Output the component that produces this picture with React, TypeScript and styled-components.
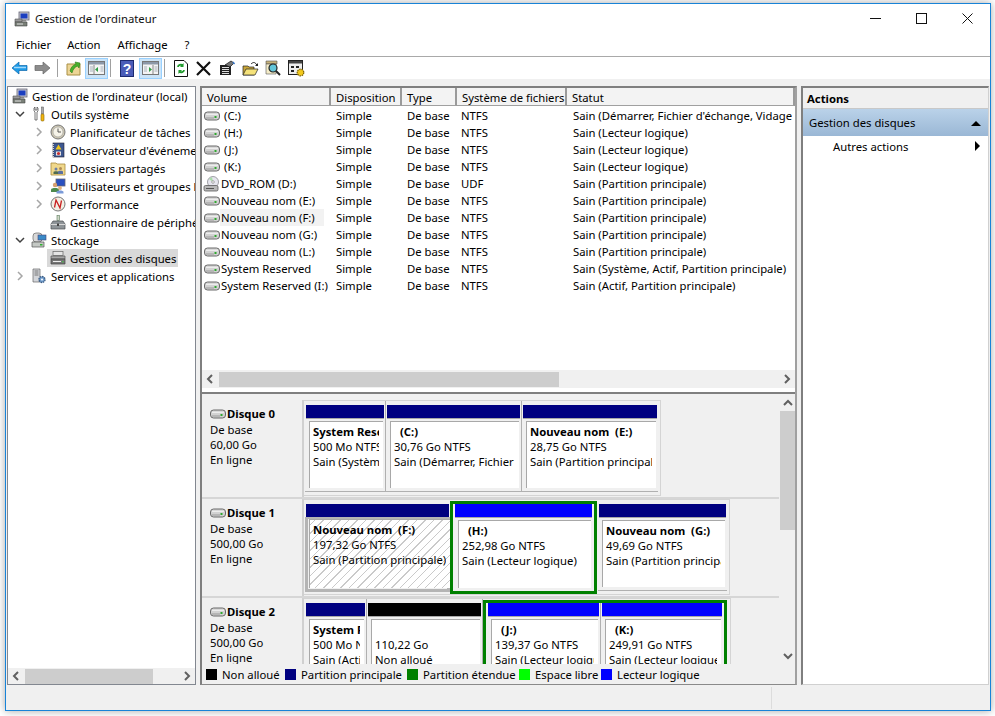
import React from "react";
import styled, { createGlobalStyle } from "styled-components";

const Global = createGlobalStyle`
  html, body { margin: 0; padding: 0; background: #fff; }
  body { font-family: "Noto Sans", "Liberation Sans", sans-serif; font-size: 11.3px; color: #000; overflow: hidden; }
  * { box-sizing: border-box; }
`;

const Page = styled.div`
  width: 995px; height: 716px; padding: 3px 4px 5px 5px; overflow: hidden;
`;
const Win = styled.div`
  width: 986px; height: 708px; background: #fff; border: 1px solid #1883d7;
  box-shadow: 0 0 8px rgba(0,0,0,.35); display: flex; flex-direction: column;
`;
const TitleBar = styled.div`
  height: 29px; display: flex; align-items: center; padding-left: 8px; gap: 5px; flex: none;
`;
const TitleText = styled.div` flex: 1; color: #111; `;
const WinButtons = styled.div` display: flex; `;
const WinButton = styled.div`
  width: 46px; height: 29px; display: flex; align-items: center; justify-content: center;
`;
const MenuBar = styled.div`
  height: 24px; display: flex; align-items: center; padding-left: 10px; gap: 15px; flex: none;
  border-bottom: 1px solid #a9a9a9; padding-bottom: 1px;
`;
const MenuItem = styled.div<{ $ml?: number }>` margin-left: ${p => p.$ml ?? 0}px; `;
const Toolbar = styled.div`
  height: 22px; flex: none; display: flex; align-items: center; padding-left: 5px; background: #fff;
`;
const ToolBtn = styled.div<{ $w?: number; $on?: boolean; $ml?: number }>`
  width: ${p => p.$w ?? 16}px; height: 21px; margin-left: ${p => p.$ml ?? 0}px; flex: none;
  display: flex; align-items: center; justify-content: center;
  background: ${p => (p.$on ? "#cce4f7" : "transparent")};
  border: ${p => (p.$on ? "1px solid #99d1ff" : "none")};
`;
const ToolSep = styled.div<{ $ml: number }>`
  width: 1px; height: 18px; background: #a0a0a0; margin-left: ${p => p.$ml}px; flex: none;
`;
const Workspace = styled.div`
  flex: 1; min-height: 0; background: #f0f0f0; display: flex; padding: 7px 2px 1px 1px; gap: 4px;
`;
const Panel = styled.div<{ $w: number }>`
  width: ${p => p.$w}px; flex: none; background: #fff; display: flex; flex-direction: column;
  border: 1px solid #828790; overflow: hidden;
`;
const StatusBar = styled.div`
  height: 24px; flex: none; background: #f0f0f0; display: flex; justify-content: flex-end;
`;
const StatusCell = styled.div`
  width: 219px; border-left: 1px solid #dcdcdc; margin: 1px 0 1px;
`;

/* tree */
const Tree = styled.div` flex: 1; min-height: 0; overflow: hidden; `;
const TreeRow = styled.div<{ $indent: number }>`
  height: 18px; display: flex; align-items: center; padding-left: ${p => p.$indent}px; white-space: nowrap;
`;
const Chevron = styled.div` width: 18px; flex: none; display: flex; align-items: center; justify-content: center; `;
const TreeIcon = styled.div` width: 19px; height: 18px; flex: none; display: flex; align-items: center; justify-content: center; margin-right: 3px; `;
const TreeLabel = styled.span``;
const Selected = styled.div`
  display: flex; align-items: center; height: 18px; background: #d9d9d9; width: 131px; margin-left: -1px; padding-left: 1px;
`;

/* scroll */
const HScroll = styled.div`
  height: 16px; flex: none; background: #f0f0f0; display: flex; align-items: center;
`;
const ScrollArrow = styled.div<{ $w?: number }>`
  width: ${p => p.$w ?? 17}px; height: 16px; flex: none; display: flex; align-items: center; justify-content: center;
`;
const HThumb = styled.div<{ $w: number }>` width: ${p => p.$w}px; height: 15px; background: #cdcdcd; flex: none; `;
const Spacer = styled.div` flex: 1; `;

/* list */
const Middle = styled(Panel)`
  border-color: #7f7f7f #a0a0a0 #8a8a8a #7f7f7f; border-width: 2px 2px 1px 2px;
`;
const ListArea = styled.div`
  height: 304px; flex: none; display: flex; flex-direction: column; background: #fff;
`;
const HeaderRow = styled.div` height: 18px; display: flex; flex: none; background: #fff; `;
const HeaderCell = styled.div<{ $w: number }>`
  width: ${p => p.$w}px; flex: none; padding-left: 5px; line-height: 19px;
  background: #f3f3f3; border-right: 2px solid #9a9a9a; border-bottom: 1px solid #a0a0a0; white-space: nowrap; overflow: hidden;
`;
const ListBody = styled.div` flex: 1; min-height: 0; overflow: hidden; padding-top: 1px; `;
const ListRow = styled.div` height: 17px; display: flex; align-items: center; white-space: nowrap; `;
const VolumeCell = styled.div` width: 134px; flex: none; display: flex; align-items: center; padding-left: 1px; `;
const VolumeIcon = styled.div` width: 17px; flex: none; display: flex; justify-content: center; `;
const VolumeName = styled.span<{ $hl?: boolean; $pad: boolean }>`
  height: 17px; line-height: 17px; padding: 0 2px 0 ${p => (p.$pad ? 4 : 1)}px;
  background: ${p => (p.$hl ? "#f2f2f2" : "transparent")}; width: ${p => (p.$hl ? "104px" : "auto")};
`;
const Col = styled.div<{ $w: number }>` width: ${p => p.$w}px; flex: none; overflow: hidden; `;
const ListScroll = styled(HScroll)` height: 18px; margin-bottom: 4px; `;

const Splitter = styled.div` height: 2px; flex: none; background: #7f7f7f; `;

/* disk view */
const DiskView = styled.div` flex: 1; min-height: 0; display: flex; background: #f0f0f0; `;
const DiskScroll = styled.div` flex: 1; min-width: 0; overflow: hidden; padding-top: 6px; `;
const DiskRow = styled.div` height: 99px; display: flex; border-bottom: 2px solid #d6d6d6; `;
const DiskInfo = styled.div`
  width: 102px; flex: none; padding: 5px 0 0 8px; line-height: 15px; border-right: 2px solid #d0d0d0;
`;
const DiskTitle = styled.div` display: flex; align-items: center; font-weight: 700; height: 17px; gap: 1px; `;
const Parts = styled.div`
  display: flex; align-self: flex-start; height: 96px; border: 1px solid #d4d4d4; border-left: none;
  padding: 0 2px 3px 1px; align-items: stretch;
`;
const Part = styled.div<{ $w: number; $sep?: boolean; $inner?: boolean }>`
  width: ${p => p.$w}px; flex: none; display: flex; flex-direction: column; padding: ${p => (p.$inner ? 0 : 4)}px 0 0 1px;
  border-right: ${p => (p.$sep ? "1px solid #b0b0b0" : "none")};
  border-bottom: ${p => (p.$inner ? "none" : "1px solid #b0b0b0")};
  background: #f0f0f0; min-width: 0;
`;
const Bar = styled.div<{ $c: string }>` height: 13px; flex: none; background: ${p => p.$c}; margin-right: 1px; `;
const BarLine = styled.div` height: 1px; flex: none; background: #a8a8a8; margin-right: 1px; `;
const Box = styled.div<{ $hatch?: boolean }>`
  flex: 1; min-height: 0; margin: 2px 2px 3px 3px; background: ${p => (p.$hatch ? "repeating-linear-gradient(-45deg, #fff 0 5px, #cacaca 5px 6px)" : "#fff")};
  border-top: 1px solid #a8a8a8; border-left: 1px solid #a8a8a8; padding: 2px 4px 0 3px;
  line-height: 15px; display: flex;
`;
const BoxClip = styled.div` flex: 1; min-width: 0; overflow: hidden; white-space: nowrap; `;
const BoxLine = styled.div``;
const BoxTitle = styled.div<{ $indent?: boolean }>` font-weight: 700; padding-left: ${p => (p.$indent ? 6 : 0)}px; height: 15px; white-space: pre; `;
const SelectedPart = styled(Part)`
  padding: 4px 0 0 1px; border-bottom: none;
`;
const SelFrame = styled.div`
  flex: 1; min-height: 0; border: 3px solid #b4b4b4; border-top-width: 2px; margin: 0 0 -1px -1px; display: flex;
`;
const HatchBox = styled(Box)` margin: 0 0 1px 1px; `;
const Extended = styled.div<{ $w: number }>`
  width: ${p => p.$w}px; flex: none; border: 3px solid #008000; margin: 1px 1px 0 0; display: flex; height: 93px; padding: 0 1px;
`;
const VScroll = styled.div`
  width: 16px; flex: none; background: #f0f0f0; display: flex; flex-direction: column; align-items: center;
`;
const VArrow = styled.div` height: 17px; flex: none; display: flex; align-items: center; justify-content: center; `;
const VThumb = styled.div` width: 15px; height: 119px; background: #cdcdcd; flex: none; `;
const Legend = styled.div`
  height: 20px; flex: none; background: #f0f0f0; display: flex; align-items: center; padding-left: 4px;
`;
const LegendItem = styled.div<{ $w: number }>` display: flex; align-items: center; width: ${p => p.$w}px; flex: none; `;
const Swatch = styled.div<{ $c: string }>` width: 11px; height: 11px; background: ${p => p.$c}; margin-right: 5px; flex: none; `;

/* actions */
const ActionsPanel = styled(Panel)` border: 1px solid #d0d0d0; border-top: 2px solid #7f7f7f; border-left: 2px solid #7f7f7f; `;
const ActionsHead = styled.div` height: 21px; line-height: 21px; padding-left: 4px; font-weight: 700; background: #f0f0f0; border-bottom: 1px solid #c8c8c8; flex: none; `;
const ActionsSection = styled.div`
  height: 27px; flex: none; display: flex; align-items: center; justify-content: space-between; padding: 0 7px 0 6px;
  background: linear-gradient(#bad2e9, #9ab7d5);
`;
const ActionsItem = styled.div`
  height: 20px; flex: none; display: flex; align-items: center; justify-content: space-between; padding: 0 7px 0 30px;
`;

/* icons */
const S = ({ w = 16, h = 16, children }: { w?: number; h?: number; children: React.ReactNode }) => (
  <svg width={w} height={h} viewBox={`0 0 ${w} ${h}`} style={{ display: "block", flex: "none" }}>{children}</svg>
);

const ComputerIcon = () => (
  <S>
    <rect x="5" y="1" width="10" height="8" fill="#c8c8d0" stroke="#667" strokeWidth=".8" />
    <rect x="6.5" y="2.5" width="7" height="5" fill="#1c3fc0" />
    <rect x="8" y="9" width="4" height="1.5" fill="#888" />
    <path d="M1 8h7v3H1z" fill="#9a9a9a" stroke="#555" strokeWidth=".6" />
    <path d="M1 11h12v4H1z" fill="#7a8078" stroke="#444" strokeWidth=".6" />
    <path d="M3 13h6" stroke="#ddd" />
  </S>
);
const ToolsIcon = () => (
  <S>
    <path d="M3 2v3l1 1v8h2V6l1-1V2L6 1v3H4V1z" fill="#fff" stroke="#555" strokeWidth=".8" />
    <rect x="10.5" y="1" width="2" height="7" fill="#aaa" stroke="#555" strokeWidth=".5" />
    <rect x="10" y="8" width="3" height="7" rx="1" fill="#f1b612" stroke="#8a6400" strokeWidth=".6" />
  </S>
);
const ClockIcon = () => (
  <S>
    <circle cx="8" cy="8" r="7" fill="#cfc9b4" stroke="#777" />
    <circle cx="8" cy="8" r="5" fill="#f6f3e8" stroke="#999" strokeWidth=".6" />
    <path d="M8 4.5V8h3" fill="none" stroke="#555" strokeWidth="1" />
  </S>
);
const EventIcon = () => (
  <S>
    <rect x="3" y="1" width="11" height="14" fill="#3e5890" stroke="#223" strokeWidth=".6" />
    <path d="M3 2v13" stroke="#ccc" strokeDasharray="1 1" strokeWidth="2" />
    <path d="M8.5 2.5l3 5h-6z" fill="#f2c81c" />
    <rect x="6" y="9.5" width="5" height="4" fill="#e8e8e8" />
    <circle cx="8.5" cy="11.5" r="1.6" fill="#c83030" />
  </S>
);
const SharedIcon = () => (
  <S>
    <path d="M1 3h5l1 1h8v11H1z" fill="#f0d88c" stroke="#a88a3c" strokeWidth=".8" />
    <circle cx="6" cy="9" r="1.5" fill="#6a7fa8" />
    <path d="M3.500 14v-2c0-1 5-1 5 0v2z" fill="#4f6b50" />
    <circle cx="10.500" cy="8.500" r="1.500" fill="#b08a55" />
    <path d="M8 14v-2.500c0-1 5-1 5 0V14z" fill="#5a6fa0" />
  </S>
);
const UsersIcon = () => (
  <S>
    <rect x="6" y="1" width="9" height="7" fill="#2a50c0" stroke="#667" strokeWidth=".8" />
    <circle cx="5" cy="7" r="2.200" fill="#d6a070" />
    <path d="M1 14v-2.500c0-2 8-2 8 0V14z" fill="#4d8a4d" />
    <circle cx="10" cy="10" r="1.900" fill="#e0b080" />
    <path d="M6.500 15.500v-1.500c0-2 7-2 7 0v1.500z" fill="#7a9ad8" />
  </S>
);
const PerfIcon = () => (
  <S>
    <circle cx="8" cy="8" r="7" fill="#f2efe4" stroke="#777" />
    <path d="M4.500 11.500L6 4l4 8 1.500-7.500" fill="none" stroke="#c82020" strokeWidth="1.300" />
  </S>
);
const DeviceIcon = () => (
  <S>
    <rect x="7" y="1.500" width="2.500" height="5" fill="#cfd8c8" stroke="#5a7a5a" strokeWidth=".6" />
    <path d="M3 7h10l2 3v5H1v-5z" fill="#8e9498" stroke="#4a4e52" strokeWidth=".7" />
    <path d="M1 10.500h14" stroke="#d8d8d8" />
    <rect x="7" y="9.500" width="2" height="2.500" fill="#444" />
  </S>
);
const StorageIcon = () => (
  <S>
    <rect x="2" y="1" width="9" height="9" rx="3" fill="#d8d8d8" stroke="#666" strokeWidth=".7" />
    <rect x="7" y="3" width="8" height="5" fill="#3a8ac8" stroke="#447" strokeWidth=".6" />
    <path d="M1 10h12v5H1z" fill="#c4c8c4" stroke="#555" strokeWidth=".7" />
    <rect x="9" y="12" width="2.500" height="1.500" fill="#30b030" />
  </S>
);
const DiskMgmtIcon = () => (
  <S>
    <rect x="3" y="1.500" width="10" height="4" fill="#e4e4e4" stroke="#666" strokeWidth=".7" />
    <path d="M1 6h14v3H1z" fill="#a8a8a8" stroke="#555" strokeWidth=".7" />
    <path d="M1 9h14v5H1z" fill="#777" stroke="#444" strokeWidth=".7" />
    <path d="M3 11.500h8" stroke="#eee" />
    <rect x="12" y="11" width="1.500" height="1.500" fill="#4caf50" />
  </S>
);
const ServicesIcon = () => (
  <S>
    <path d="M2 1h7v13H2z" fill="#d4d6da" stroke="#666" strokeWidth=".7" />
    <path d="M3.500 3h4M3.500 5h4M3.500 7h4" stroke="#777" />
    <circle cx="11" cy="11.500" r="3" fill="#6f9ccc" stroke="#3a5a80" strokeWidth="1.400" strokeDasharray="1.500 .8" />
    <circle cx="11" cy="11.500" r="1" fill="#fff" />
  </S>
);
const DriveIcon = () => (
  <S w={16} h={10}>
    <rect x=".5" y="1" width="15" height="8" rx="3" fill="#d2d2d2" stroke="#6a6a6a" />
    <path d="M2 3.300h12" stroke="#f4f4f4" />
    <rect x="10.500" y="5" width="2" height="2" fill="#2ea82e" />
    <path d="M2 7h8" stroke="#9a9a9a" />
  </S>
);
const DvdIcon = () => (
  <S w={17} h={16}>
    <circle cx="10" cy="6" r="5.500" fill="#e6e6ee" stroke="#8a8a92" strokeWidth=".8" />
    <path d="M6 3l4 3-1-5z" fill="#a8dca8" />
    <circle cx="10" cy="6" r="1.300" fill="#fff" stroke="#777" strokeWidth=".6" />
    <rect x="1" y="9.500" width="14" height="5.500" rx="1.500" fill="#b8b8b8" stroke="#5a5a5a" strokeWidth=".8" />
    <path d="M3 12.500h8" stroke="#555" />
  </S>
);
const TreeChevron = ({ open }: { open?: boolean }) => (
  <S w={12} h={12}>
    {open
      ? <path d="M2 4l4 4 4-4" fill="none" stroke="#404040" strokeWidth="1.500" />
      : <path d="M4 2l4 4-4 4" fill="none" stroke="#a6a6a6" strokeWidth="1.500" />}
  </S>
);
const SmallArrow = ({ dir }: { dir: "l" | "r" | "u" | "d" }) => {
  const d = { l: "M7 2L3 6l4 4", r: "M4 2l4 4-4 4", u: "M2 8l4-4 4 4", d: "M2 4l4 4 4-4" }[dir];
  return <S w={11} h={12}><path d={d} fill="none" stroke="#606060" strokeWidth="2" /></S>;
};

const BackIcon = () => (
  <S w={17} h={16}><path d="M1 8l7-6v3.500h8v5H8V14z" fill="#1e9be8" stroke="#0a66aa" strokeWidth=".7" /><path d="M3 7.500h12" stroke="#9fd8fb" strokeWidth="1.500" /></S>
);
const ForwardIcon = () => (
  <S w={17} h={16}><path d="M16 8L9 2v3.500H1v5h8V14z" fill="#8c8c8c" stroke="#666" strokeWidth=".7" /></S>
);
const UpIcon = () => (
  <S>
    <path d="M1 4h13v11H1z" fill="#edd596" stroke="#a98f44" />
    <path d="M4 11c1-4 3-6 6-7l-1-2 5 1-1 5-1.500-2C9 7 7 9 6 13z" fill="#47b02c" stroke="#2c7c18" strokeWidth=".6" />
  </S>
);
const PaneIcon = ({ right }: { right?: boolean }) => (
  <S w={17} h={14}>
    <rect x=".5" y=".5" width="16" height="13" fill="#f4f4f4" stroke="#777" />
    <rect x="1" y="1" width="15" height="2.500" fill="#8c98a8" />
    <path d={right ? "M11 4v9" : "M6 4v9"} stroke="#888" />
    <path d="M2 6h3M2 8h3M2 10h3M12.500 6h3M12.500 8h3M12.500 10h3" stroke="#a9b2bc" />
    <path d={right ? "M7 6l3 2.500-3 2.500z" : "M10 6l-3 2.500 3 2.500z"} fill="#2f9e44" />
  </S>
);
const HelpIcon = () => (
  <S w={14} h={17}>
    <rect x=".5" y=".5" width="13" height="16" fill="#4a5cb8" stroke="#1c2a70" />
    <text x="7" y="14" textAnchor="middle" fontFamily="Liberation Sans, sans-serif" fontWeight="700" fontSize="14" fill="#fff">?</text>
  </S>
);
const RefreshIcon = () => (
  <S w={14} h={17}>
    <path d="M.5.5H10l3.500 3.500v12.500H.5z" fill="#fff" stroke="#111" />
    <path d="M4 7c0-2 3-3 5-1.500M10 10c0 2-3 3-5 1.500" fill="none" stroke="#1f9a2c" strokeWidth="1.800" />
    <path d="M9.500 3v4H6zM4.500 14v-4H8z" fill="#1f9a2c" />
  </S>
);
const CloseX = () => (
  <S w={15} h={15}><path d="M1 1l13 13M14 1L1 14" stroke="#111" strokeWidth="2.200" /></S>
);
const PropsIcon = () => (
  <S>
    <path d="M1 5h11v10H1z" fill="#222" />
    <path d="M3 7.500h7M3 9.500h7M3 11.500h7M3 13.500h7" stroke="#ddd" />
    <path d="M6 5l6-4 3 2-4 4z" fill="#777" stroke="#111" strokeWidth=".7" />
    <path d="M14 2l1.500 2" stroke="#3b78c8" strokeWidth="1.500" />
  </S>
);
const OpenIcon = () => (
  <S w={17} h={15}>
    <path d="M1 5h5l1 1h5v8H1z" fill="#c9a63a" stroke="#222" strokeWidth=".7" />
    <path d="M1 14l3-6h12l-3 6z" fill="#f5e27a" stroke="#222" strokeWidth=".7" />
    <path d="M9 3c2-2 4-2 5 0l1 1" fill="none" stroke="#222" strokeWidth="1" />
    <path d="M16 2v3h-3z" fill="#222" />
  </S>
);
const SearchIcon = () => (
  <S>
    <path d="M1 1h11v3H1z" fill="#c8b27a" stroke="#555" strokeWidth=".6" />
    <path d="M1 4h10v10H1z" fill="#f4ecc8" stroke="#555" strokeWidth=".6" />
    <circle cx="8" cy="8" r="4" fill="#63c5d8" stroke="#222" strokeWidth="1.200" />
    <path d="M11 11l4 4" stroke="#222" strokeWidth="2" />
  </S>
);
const SettingsIcon = () => (
  <S w={17} h={17}>
    <rect x=".5" y=".5" width="14" height="14" fill="#eee" stroke="#222" />
    <rect x="1" y="1" width="13" height="2.500" fill="#444" />
    <path d="M3 6h3v2H3zM3 10h3v2H3zM8 6h3v2H8z" fill="#222" />
    <circle cx="12.500" cy="12.500" r="3.300" fill="#f2c81c" stroke="#7a6000" strokeWidth="1.200" strokeDasharray="1.500 .8" />
  </S>
);

/* data */
const treeRows: { indent: number; chev?: "open" | "closed"; icon: React.ReactNode; label: string; sel?: boolean; }[] = [
  { indent: 2, icon: <ComputerIcon />, label: "Gestion de l'ordinateur (local)" },
  { indent: 3, chev: "open", icon: <ToolsIcon />, label: "Outils système" },
  { indent: 22, chev: "closed", icon: <ClockIcon />, label: "Planificateur de tâches" },
  { indent: 22, chev: "closed", icon: <EventIcon />, label: "Observateur d'événements" },
  { indent: 22, chev: "closed", icon: <SharedIcon />, label: "Dossiers partagés" },
  { indent: 22, chev: "closed", icon: <UsersIcon />, label: "Utilisateurs et groupes locaux" },
  { indent: 22, chev: "closed", icon: <PerfIcon />, label: "Performance" },
  { indent: 22, icon: <DeviceIcon />, label: "Gestionnaire de périphériques" },
  { indent: 3, chev: "open", icon: <StorageIcon />, label: "Stockage" },
  { indent: 22, icon: <DiskMgmtIcon />, label: "Gestion des disques", sel: true },
  { indent: 3, chev: "closed", icon: <ServicesIcon />, label: "Services et applications" },
];

const cols = [
  { t: "Volume", w: 129 }, { t: "Disposition", w: 71 }, { t: "Type", w: 55 },
  { t: "Système de fichiers", w: 110 }, { t: "Statut", w: 228 },
];
const volumes = [
  ["(C:)", "NTFS", "Sain (Démarrer, Fichier d'échange, Vidage sur incident)"],
  ["(H:)", "NTFS", "Sain (Lecteur logique)"],
  ["(J:)", "NTFS", "Sain (Lecteur logique)"],
  ["(K:)", "NTFS", "Sain (Lecteur logique)"],
  ["DVD_ROM (D:)", "UDF", "Sain (Partition principale)"],
  ["Nouveau nom (E:)", "NTFS", "Sain (Partition principale)"],
  ["Nouveau nom (F:)", "NTFS", "Sain (Partition principale)"],
  ["Nouveau nom (G:)", "NTFS", "Sain (Partition principale)"],
  ["Nouveau nom (L:)", "NTFS", "Sain (Partition principale)"],
  ["System Reserved", "NTFS", "Sain (Système, Actif, Partition principale)"],
  ["System Reserved (I:)", "NTFS", "Sain (Actif, Partition principale)"],
];

const PRIMARY = "#000080";
const LOGICAL = "#0000ff";

const Partition = ({ w, c, title, l2, l3, indent, sep, inner }: { w: number; c: string; title?: string; l2: string; l3: string; indent?: boolean; sep?: boolean; inner?: boolean }) => (
  <Part $w={w} $sep={sep} $inner={inner}>
    <Bar $c={c} />
    <BarLine />
    <Box>
      <BoxClip>
        <BoxTitle $indent={indent}>{title}</BoxTitle>
        <BoxLine>{l2}</BoxLine>
        <BoxLine>{l3}</BoxLine>
      </BoxClip>
    </Box>
  </Part>
);

const DiskHead = ({ name, size }: { name: string; size: string }) => (
  <DiskInfo>
    <DiskTitle><DriveIcon />{name}</DiskTitle>
    <div>De base</div>
    <div>{size}</div>
    <div>En ligne</div>
  </DiskInfo>
);

export default function App() {
  return (
    <Page>
      <Global />
      <Win>
        <TitleBar>
          <ComputerIcon />
          <TitleText>Gestion de l'ordinateur</TitleText>
          <WinButtons>
            <WinButton><S w={11} h={11}><path d="M0 5.500h11" stroke="#111" /></S></WinButton>
            <WinButton><S w={11} h={11}><rect x=".5" y=".5" width="10" height="10" fill="none" stroke="#111" /></S></WinButton>
            <WinButton><S w={11} h={11}><path d="M.5.500l10 10M10.500.500l-10 10" stroke="#111" /></S></WinButton>
          </WinButtons>
        </TitleBar>
        <MenuBar>
          <MenuItem>Fichier</MenuItem>
          <MenuItem $ml={1}>Action</MenuItem>
          <MenuItem $ml={2}>Affichage</MenuItem>
          <MenuItem $ml={2}>?</MenuItem>
        </MenuBar>
        <Toolbar>
          <ToolBtn><BackIcon /></ToolBtn>
          <ToolBtn $ml={7}><ForwardIcon /></ToolBtn>
          <ToolSep $ml={7} />
          <ToolBtn $ml={8}><UpIcon /></ToolBtn>
          <ToolBtn $w={23} $on $ml={3}><PaneIcon /></ToolBtn>
          <ToolSep $ml={2} />
          <ToolBtn $ml={8}><HelpIcon /></ToolBtn>
          <ToolBtn $w={23} $on $ml={4}><PaneIcon right /></ToolBtn>
          <ToolSep $ml={2} />
          <ToolBtn $ml={8}><RefreshIcon /></ToolBtn>
          <ToolBtn $ml={6}><CloseX /></ToolBtn>
          <ToolBtn $ml={8}><PropsIcon /></ToolBtn>
          <ToolBtn $ml={7}><OpenIcon /></ToolBtn>
          <ToolBtn $ml={7}><SearchIcon /></ToolBtn>
          <ToolBtn $ml={7}><SettingsIcon /></ToolBtn>
        </Toolbar>
        <Workspace>
          <Panel $w={189}>
            <Tree>
              {treeRows.map(r => {
                const inner = (
                  <>
                    <TreeIcon>{r.icon}</TreeIcon>
                    <TreeLabel>{r.label}</TreeLabel>
                  </>
                );
                return (
                  <TreeRow key={r.label} $indent={r.indent}>
                    {r.label.startsWith("Gestion de l") ? null : (
                      <Chevron>{r.chev && <TreeChevron open={r.chev === "open"} />}</Chevron>
                    )}
                    {r.sel ? <Selected>{inner}</Selected> : inner}
                  </TreeRow>
                );
              })}
            </Tree>
            <HScroll>
              <ScrollArrow><SmallArrow dir="l" /></ScrollArrow>
              <HThumb $w={128} />
              <Spacer />
              <ScrollArrow><SmallArrow dir="r" /></ScrollArrow>
            </HScroll>
          </Panel>
          <Middle $w={597}>
            <ListArea>
              <HeaderRow>
                {cols.map(c => (
                  <HeaderCell key={c.t} $w={c.w}>{c.t}</HeaderCell>
                ))}
              </HeaderRow>
              <ListBody>
                {volumes.map(v => {
                  const paren = v[0].startsWith("(");
                  return (
                    <ListRow key={v[0]}>
                      <VolumeCell>
                        <VolumeIcon>{v[0].startsWith("DVD") ? <DvdIcon /> : <DriveIcon />}</VolumeIcon>
                        <VolumeName $pad={paren} $hl={v[0].includes("(F:)")}>{v[0]}</VolumeName>
                      </VolumeCell>
                      <Col $w={71}>Simple</Col>
                      <Col $w={54}>De base</Col>
                      <Col $w={112}>{v[1]}</Col>
                      <Col $w={219}>{v[2]}</Col>
                    </ListRow>
                  );
                })}
              </ListBody>
              <ListScroll>
                <ScrollArrow><SmallArrow dir="l" /></ScrollArrow>
                <HThumb $w={340} />
                <Spacer />
                <ScrollArrow><SmallArrow dir="r" /></ScrollArrow>
              </ListScroll>
            </ListArea>
            <Splitter />
            <DiskView>
              <DiskScroll>
                <DiskRow>
                  <DiskHead name="Disque 0" size="60,00 Go" />
                  <Parts>
                    <Partition w={81} c={PRIMARY} title="System Reserved" l2="500 Mo NTFS" l3="Sain (Système, Actif)" sep />
                    <Partition w={136} c={PRIMARY} title="(C:)" indent l2="30,76 Go NTFS" l3="Sain (Démarrer, Fichier d'échange)" sep />
                    <Partition w={136} c={PRIMARY} title="Nouveau nom  (E:)" l2="28,75 Go NTFS" l3="Sain (Partition principale)" />
                  </Parts>
                </DiskRow>
                <DiskRow>
                  <DiskHead name="Disque 1" size="500,00 Go" />
                  <Parts>
                    <SelectedPart $w={145}>
                      <Bar $c={PRIMARY} />
                      <SelFrame>
                        <HatchBox $hatch>
                          <BoxClip>
                            <BoxTitle>Nouveau nom  (F:)</BoxTitle>
                            <BoxLine>197,32 Go NTFS</BoxLine>
                            <BoxLine>Sain (Partition principale)</BoxLine>
                          </BoxClip>
                        </HatchBox>
                      </SelFrame>
                    </SelectedPart>
                    <Extended $w={147}>
                      <Partition w={139} c={LOGICAL} title="(H:)" indent l2="252,98 Go NTFS" l3="Sain (Lecteur logique)" inner />
                    </Extended>
                    <Partition w={129} c={PRIMARY} title="Nouveau nom  (G:)" l2="49,69 Go NTFS" l3="Sain (Partition principale)" />
                  </Parts>
                </DiskRow>
                <DiskRow>
                  <DiskHead name="Disque 2" size="500,00 Go" />
                  <Parts>
                    <Partition w={62} c={PRIMARY} title="System Reserved" l2="500 Mo NTFS" l3="Sain (Actif, Partition)" sep />
                    <Partition w={116} c="#000" l2="110,22 Go" l3="Non alloué" sep />
                    <Extended $w={244}>
                      <Partition w={114} c={LOGICAL} title="(J:)" indent l2="139,37 Go NTFS" l3="Sain (Lecteur logique)" sep inner />
                      <Partition w={122} c={LOGICAL} title="(K:)" indent l2="249,91 Go NTFS" l3="Sain (Lecteur logique)" inner />
                    </Extended>
                  </Parts>
                </DiskRow>
              </DiskScroll>
              <VScroll>
                <VArrow><SmallArrow dir="u" /></VArrow>
                <VThumb />
                <Spacer />
                <VArrow><SmallArrow dir="d" /></VArrow>
              </VScroll>
            </DiskView>
            <Legend>
              <LegendItem $w={79}><Swatch $c="#000" />Non alloué</LegendItem>
              <LegendItem $w={122}><Swatch $c={PRIMARY} />Partition principale</LegendItem>
              <LegendItem $w={112}><Swatch $c="#008000" />Partition étendue</LegendItem>
              <LegendItem $w={82}><Swatch $c="#00ff00" />Espace libre</LegendItem>
              <LegendItem $w={110}><Swatch $c={LOGICAL} />Lecteur logique</LegendItem>
            </Legend>
          </Middle>
          <ActionsPanel $w={188}>
            <ActionsHead>Actions</ActionsHead>
            <ActionsSection>
              <span>Gestion des disques</span>
              <S w={10} h={6}><path d="M0 6l5-5 5 5z" fill="#000" /></S>
            </ActionsSection>
            <ActionsItem>
              <span>Autres actions</span>
              <S w={6} h={10}><path d="M0 0l5 5-5 5z" fill="#000" /></S>
            </ActionsItem>
          </ActionsPanel>
        </Workspace>
        <StatusBar><StatusCell /></StatusBar>
      </Win>
    </Page>
  );
}
